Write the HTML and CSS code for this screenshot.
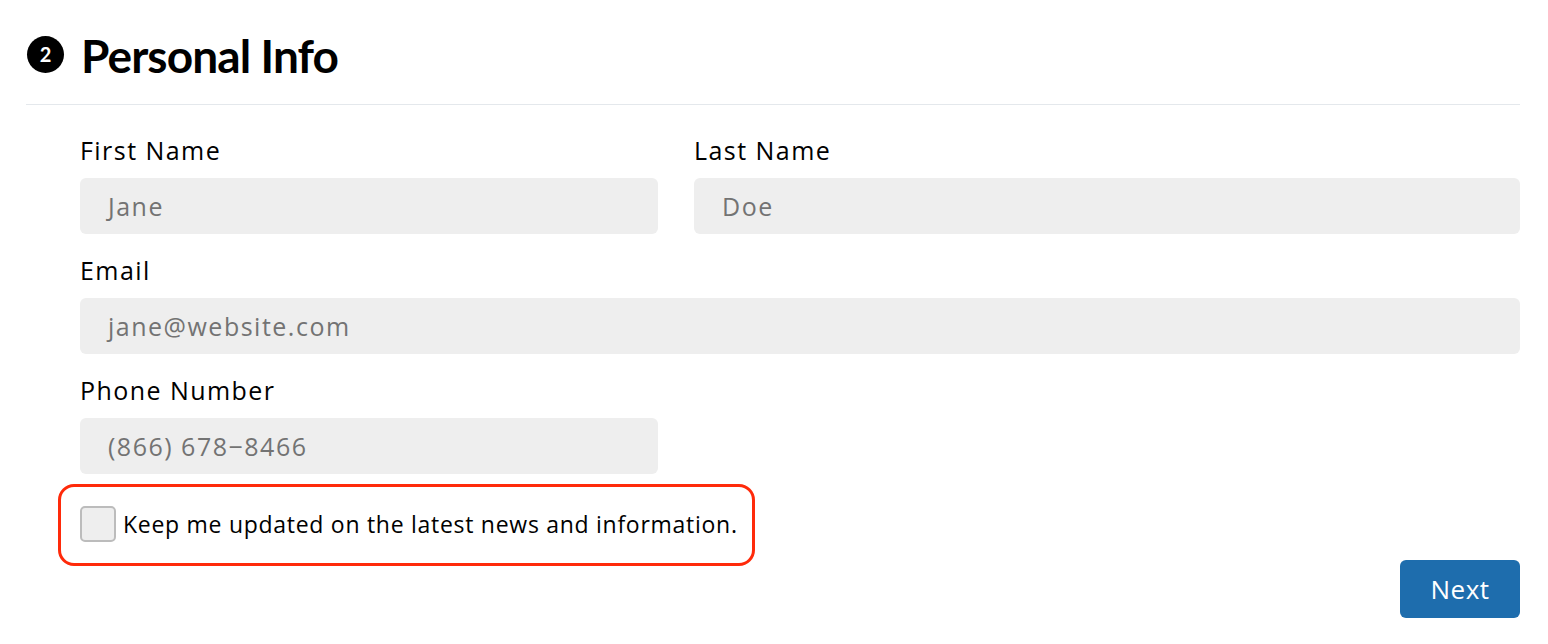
FILE: index.html
```html
<!DOCTYPE html>
<html>
<head>
<meta charset="utf-8">
<link rel="stylesheet" href="styles.css">
</head>
<body>
<section class="panel">
  <header class="section-head">
    <span class="step">2</span>
    <h2 class="title">Personal Info</h2>
  </header>
  <form class="form">
    <div class="grid">
      <div class="field">
        <label class="label">First Name</label>
        <div class="input">Jane</div>
      </div>
      <div class="field">
        <label class="label">Last Name</label>
        <div class="input">Doe</div>
      </div>
      <div class="field span">
        <label class="label">Email</label>
        <div class="input">jane@website.com</div>
      </div>
      <div class="field">
        <label class="label">Phone Number</label>
        <div class="input">(866) 678−8466</div>
      </div>
    </div>
    <div class="actions">
      <label class="optin">
        <span class="checkbox"></span>
        <span class="optin-text">Keep me updated on the latest news and information.</span>
      </label>
      <button type="button" class="next">Next</button>
    </div>
  </form>
</section>
</body>
</html>
```
FILE: styles.css
```css
* { box-sizing: border-box; }
body {
  margin: 0;
  background: #fff;
  font-family: "Open Sans", Lato, sans-serif;
  color: #000;
}
.panel {
  padding: 27px 28px 0 26px;
}
.section-head {
  display: flex;
  align-items: center;
  gap: 17px;
  height: 58px;
  padding-left: 1px;
  border-bottom: 1px solid #e4e8ec;
  box-sizing: content-box;
  padding-bottom: 19px;
}
.step {
  width: 37px;
  height: 37px;
  border-radius: 50%;
  background: #000;
  color: #fff;
  font-family: Lato, sans-serif;
  font-weight: 700;
  font-size: 20px;
  display: flex;
  align-items: center;
  justify-content: center;
  margin-top: -4px;
}
.title {
  margin: 0;
  font-family: Lato, sans-serif;
  font-size: 46px;
  font-weight: 700;
  letter-spacing: -0.9px;
  line-height: 58px;
}
.form {
  padding: 29px 0 0 54px;
}
.grid {
  display: grid;
  grid-template-columns: 578px 1fr;
  column-gap: 36px;
  row-gap: 20px;
}
.span { grid-column: 1 / -1; }
.label {
  display: block;
  font-size: 25px;
  letter-spacing: 1.45px;
  line-height: 32px;
  margin-bottom: 12px;
}
.input {
  height: 56px;
  background: #eeeeee;
  border-radius: 6px;
  padding-left: 28px;
  display: flex;
  align-items: center;
  font-size: 25px;
  letter-spacing: 1.5px;
  color: #737373;
}
.actions {
  display: flex;
  justify-content: space-between;
  align-items: flex-start;
  margin-top: 10px;
}
.optin {
  display: inline-flex;
  align-items: center;
  gap: 7px;
  margin-left: -22px;
  padding: 19px 14px 21px 19px;
  border: 3px solid #ff2a0a;
  border-radius: 16px;
}
.checkbox {
  width: 36px;
  height: 36px;
  background: #eeeeee;
  border: 2px solid #bcbcbc;
  border-radius: 5px;
  flex: none;
}
.optin-text {
  font-size: 23px;
  letter-spacing: 0.72px;
}
.next {
  margin-top: 76px;
  width: 120px;
  height: 58px;
  border: 0;
  border-radius: 6px;
  background: #1e6dad;
  color: #fff;
  font-family: inherit;
  font-size: 26px;
  letter-spacing: 0.5px;
  cursor: pointer;
}
```
